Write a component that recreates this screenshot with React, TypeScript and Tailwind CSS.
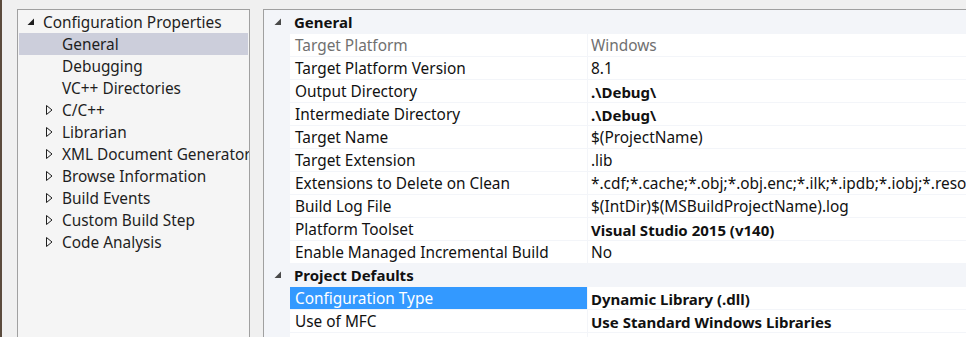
import React from "react";

const font = { fontFamily: '"Noto Sans", "Open Sans", sans-serif' };

function Expanded({ gray }: { gray?: boolean }) {
  return (
    <svg width="8" height="8" viewBox="0 0 8 8" className="shrink-0">
      <polygon points="7,0.5 7,7 0.5,7" fill={gray ? "#4a4a4a" : "#1e1e1e"} />
    </svg>
  );
}

function Collapsed() {
  return (
    <svg width="7" height="10" viewBox="0 0 7 10" className="shrink-0">
      <polygon points="0.5,0.5 6,5 0.5,9.5" fill="none" stroke="#1e1e1e" strokeWidth="1" />
    </svg>
  );
}

const treeItems = [
  { name: "General", kids: false, selected: true },
  { name: "Debugging", kids: false },
  { name: "VC++ Directories", kids: false },
  { name: "C/C++", kids: true },
  { name: "Librarian", kids: true },
  { name: "XML Document Generator Tool", kids: true },
  { name: "Browse Information", kids: true },
  { name: "Build Events", kids: true },
  { name: "Custom Build Step", kids: true },
  { name: "Code Analysis", kids: true },
];

type Row = { name: string; value: string; bold?: boolean; gray?: boolean; selected?: boolean };

const general: Row[] = [
  { name: "Target Platform", value: "Windows", gray: true },
  { name: "Target Platform Version", value: "8.1" },
  { name: "Output Directory", value: ".\\Debug\\", bold: true },
  { name: "Intermediate Directory", value: ".\\Debug\\", bold: true },
  { name: "Target Name", value: "$(ProjectName)" },
  { name: "Target Extension", value: ".lib" },
  {
    name: "Extensions to Delete on Clean",
    value: "*.cdf;*.cache;*.obj;*.obj.enc;*.ilk;*.ipdb;*.iobj;*.resources;*.tlb;*.tli;*.tlh;*.tmp",
  },
  { name: "Build Log File", value: "$(IntDir)$(MSBuildProjectName).log" },
  { name: "Platform Toolset", value: "Visual Studio 2015 (v140)", bold: true },
  { name: "Enable Managed Incremental Build", value: "No" },
];

const defaults: Row[] = [
  { name: "Configuration Type", value: "Dynamic Library (.dll)", bold: true, selected: true },
  { name: "Use of MFC", value: "Use Standard Windows Libraries", bold: true },
  { name: "", value: "" },
];

function Header({ title, tall }: { title: string; tall?: boolean }) {
  return (
    <div className={`flex items-center ${tall ? "h-[23px]" : "h-[22px]"}`}>
      <div className="w-[25px] flex justify-end pr-[7px]">
        <Expanded gray />
      </div>
      <span className="pl-[5px] pt-px font-bold text-[15px] text-[#111]">{title}</span>
    </div>
  );
}

function PropRow({ r }: { r: Row }) {
  const nameCls = r.selected
    ? "bg-[#3399ff] text-white"
    : r.gray
    ? "bg-white text-[#707070]"
    : "bg-white text-[#111]";
  return (
    <div className="flex h-[22px] gap-px text-[15.4px] leading-[22px]">
      <div className="w-[25px] shrink-0" />
      <div className={`w-[297px] shrink-0 pl-[5px] pt-px whitespace-nowrap overflow-hidden ${nameCls}`}>
        {r.name}
      </div>
      <div
        className={`flex-1 bg-white pl-[3px] pt-px whitespace-nowrap overflow-hidden ${
          r.gray ? "text-[#707070]" : "text-[#111]"
        } ${r.bold ? "font-bold text-[15px]" : ""}`}
      >
        {r.value}
      </div>
    </div>
  );
}

export default function App() {
  return (
    <div
      className="w-[966px] h-[337px] overflow-hidden bg-[#f0f0f0] border-l-2 border-[#5b4b3d] flex pt-[9px] pl-[15px] gap-[13px]"
      style={font}
    >
      <div className="w-[233px] h-[340px] shrink-0 bg-[#f5f5f5] border-l border-t border-r border-[#a0a0a0] px-px pt-px overflow-hidden">
        <div className="flex items-center h-[22px] pl-[8px] gap-[8px] text-[15.4px] text-[#1e1e1e]">
          <Expanded />
          <span className="whitespace-nowrap pt-px">Configuration Properties</span>
        </div>
        {treeItems.map((it) => (
          <div
            key={it.name}
            className={`flex items-center h-[22px] text-[15.4px] text-[#1e1e1e] whitespace-nowrap ${
              it.selected ? "bg-[#cccedb]" : ""
            }`}
          >
            <div className="w-[27px] pl-[27px] shrink-0 flex items-center">
              {it.kids ? <Collapsed /> : null}
            </div>
            <span className="pl-[16px] pt-px">{it.name}</span>
          </div>
        ))}
      </div>
      <div className="flex-1 h-[340px] bg-[#f3f5f9] border-l border-t border-[#a0a0a0] pt-0 overflow-hidden">
        <div className="flex flex-col gap-px">
          <Header title="General" tall />
          {general.map((r) => (
            <PropRow key={r.name} r={r} />
          ))}
          <Header title="Project Defaults" />
          {defaults.map((r, i) => (
            <PropRow key={i} r={r} />
          ))}
        </div>
      </div>
    </div>
  );
}
